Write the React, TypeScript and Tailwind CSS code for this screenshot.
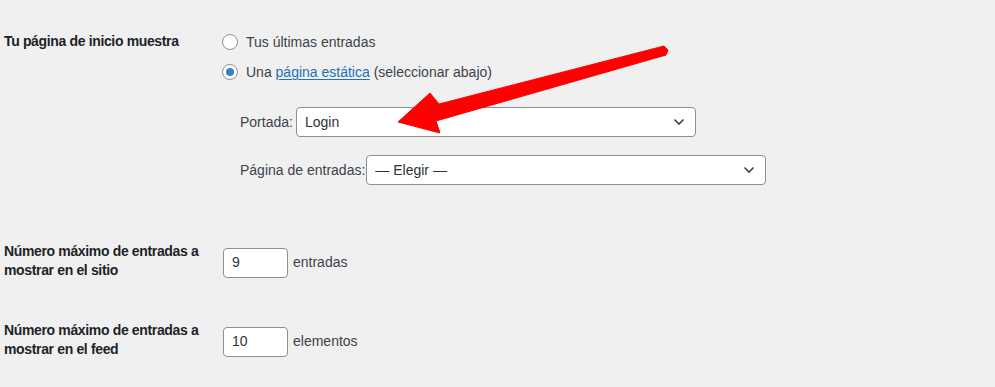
import { ReactNode } from "react";

const font = { fontFamily: '"Liberation Sans", Arial, sans-serif' };

export default function App() {
  return (
    <div
      className="relative h-[387px] w-[995px] overflow-hidden bg-[#f0f0f1] pl-[4px] text-[14px] text-[#1d2327]"
      style={font}
    >
      <div className="flex pt-[32px]">
        <Label>Tu página de inicio muestra</Label>
        <div className="-mt-[5px]">
          <Radio>Tus últimas entradas</Radio>
          <Radio checked>
            Una{" "}
            <a className="text-[#2271b1] underline underline-offset-2">
              página estática
            </a>{" "}
            (seleccionar abajo)
          </Radio>
          <div className="ml-[18px] mt-[20px] flex items-center">
            <span className="mr-[3px] leading-5 text-[#3c434a]">Portada:</span>
            <FakeSelect value="Login" />
          </div>
          <div className="ml-[18px] mt-[18px] flex items-center">
            <span className="mr-[1px] leading-5 text-[#3c434a]">
              Página de entradas:
            </span>
            <FakeSelect value="— Elegir —" />
          </div>
        </div>
      </div>

      <NumberRow className="mt-[57px]" value="9" unit="entradas">
        Número máximo de entradas a mostrar en el sitio
      </NumberRow>
      <NumberRow className="mt-[41px]" value="10" unit="elementos">
        Número máximo de entradas a mostrar en el feed
      </NumberRow>

      <svg
        className="pointer-events-none absolute left-0 top-0"
        width="995"
        height="387"
        viewBox="0 0 995 387"
      >
        <polygon
          points="398,122 430,93 439,104 664,46 668,50 666,55 436,121 440,133"
          fill="#ff0000"
          stroke="#ff0000"
          strokeWidth="1"
          strokeLinejoin="round"
        />
      </svg>
    </div>
  );
}

function Label({ children }: { children: ReactNode }) {
  return (
    <div className="w-[218px] shrink-0 pr-[15px] font-semibold leading-[19px] tracking-[-0.35px]">
      {children}
    </div>
  );
}

function Radio({
  children,
  checked = false,
}: {
  children: ReactNode;
  checked?: boolean;
}) {
  return (
    <div className="flex h-[30px] items-center">
      <span className="mr-[8px] flex h-4 w-4 items-center justify-center rounded-full border border-[#8c8f94] bg-white">
        {checked && <span className="h-2 w-2 rounded-full bg-[#3582c4]" />}
      </span>
      <span className="leading-5 text-[#3c434a]">{children}</span>
    </div>
  );
}

function FakeSelect({ value }: { value: string }) {
  return (
    <div className="flex h-[30px] w-[400px] items-center justify-between rounded-[4px] border border-[#8c8f94] bg-white pl-[8px] pr-[10px] text-[#2c3338]">
      <span>{value}</span>
      <svg width="12" height="8" viewBox="0 0 12 8">
        <path
          d="M1.5 1.5 L6 6 L10.5 1.5"
          fill="none"
          stroke="#3c434a"
          strokeWidth="1.6"
        />
      </svg>
    </div>
  );
}

function NumberRow({
  children,
  value,
  unit,
  className,
}: {
  children: ReactNode;
  value: string;
  unit: string;
  className?: string;
}) {
  return (
    <div className={`flex ${className ?? ""}`}>
      <Label>{children}</Label>
      <div className="ml-[1px] mt-[3px] flex items-center">
        <div className="flex h-[30px] w-[65px] items-center rounded-[4px] border border-[#8c8f94] bg-white pl-[8px] text-[#2c3338]">
          {value}
        </div>
        <span className="ml-[5px] text-[#3c434a]">{unit}</span>
      </div>
    </div>
  );
}
